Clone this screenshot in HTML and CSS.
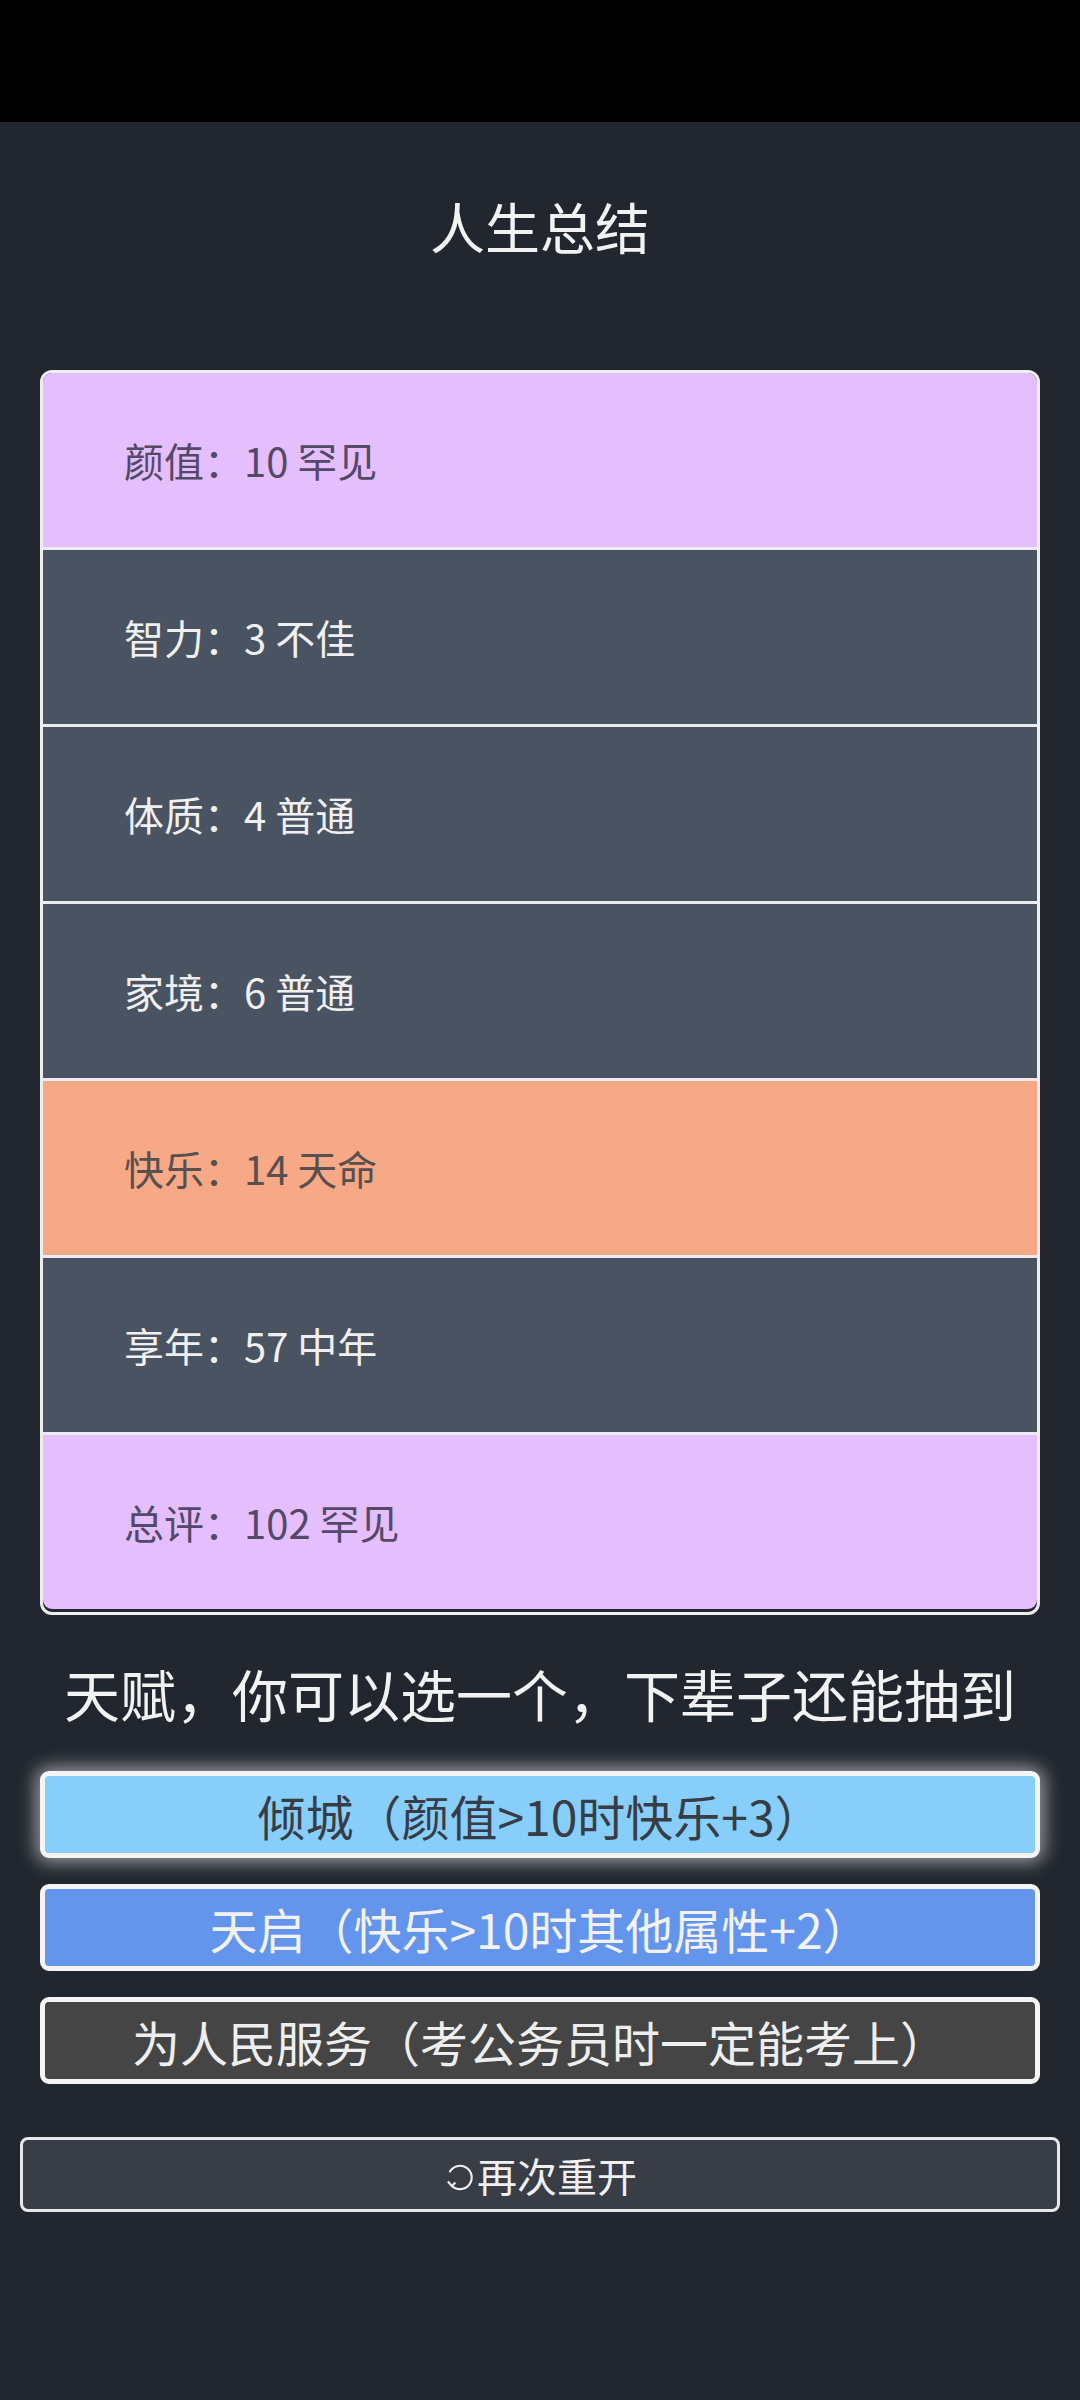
FILE: index.html
```html
<!DOCTYPE html>
<html lang="zh-CN">
<head>
<meta charset="utf-8">
<title>人生总结</title>
<link rel="stylesheet" href="styles.css">
</head>
<body>
<div class="statusbar"></div>
<main class="page">
  <h1 class="title">人生总结</h1>
  <ul class="summary">
    <li class="row rare">颜值：10 罕见</li>
    <li class="row plain">智力：3 不佳</li>
    <li class="row plain">体质：4 普通</li>
    <li class="row plain">家境：6 普通</li>
    <li class="row fate">快乐：14 天命</li>
    <li class="row plain">享年：57 中年</li>
    <li class="row rare">总评：102 罕见</li>
  </ul>
  <h2 class="talent-title">天赋，你可以选一个，下辈子还能抽到</h2>
  <div class="talents">
    <button class="talent t-sky selected">倾城（颜值&gt;10时快乐+3）</button>
    <button class="talent t-blue">天启（快乐&gt;10时其他属性+2）</button>
    <button class="talent t-dark">为人民服务（考公务员时一定能考上）</button>
  </div>
  <button class="restart"><svg class="restart-icon" viewBox="0 0 32 32" width="34" height="34"><path d="M8.2 24.2 A11 11 0 1 0 6.2 11.5" fill="none" stroke="currentColor" stroke-width="2"/><path d="M4.6 20.2 L8.4 24.6 L11.6 21.2" fill="none" stroke="currentColor" stroke-width="2" stroke-linejoin="round"/></svg>再次重开</button>
</main>
</body>
</html>
```

FILE: styles.css
```css
html, body {
  margin: 0;
  padding: 0;
}
body {
  background: #22272f;
  font-family: "Noto Sans CJK SC", "Noto Sans", sans-serif;
  color: #eeeeee;
  min-height: 2400px;
}
.statusbar {
  height: 122px;
  background: #000000;
}
.page {
  display: flex;
  flex-direction: column;
  padding: 0 20px;
}
.title {
  margin: 69px 0 0;
  font-size: 55px;
  font-weight: 400;
  line-height: 68px;
  text-align: center;
  color: #f2f2f2;
}
.summary {
  list-style: none;
  margin: 111px 20px 0;
  padding: 0 0 3px;
  border: 3px solid #eeeeee;
  border-radius: 12px;
  overflow: hidden;
  display: flex;
  flex-direction: column;
}
.row {
  height: 174px;
  display: flex;
  align-items: center;
  padding-left: 81px;
  font-size: 40px;
  border-bottom: 3px solid #ecebf2;
}
.row:last-child {
  border-bottom: none;
  border-radius: 0 0 9px 9px;
}
.rare {
  background: #e5bffd;
  color: #544a68;
}
.plain {
  background: #4a5361;
  color: #f0f0f0;
}
.fate {
  background: #f6a887;
  color: #56504f;
}
.talent-title {
  margin: 42px 0 0;
  font-size: 56px;
  font-weight: 400;
  line-height: 72px;
  text-align: center;
  color: #f2f2f2;
}
.talents {
  margin: 42px 20px 0;
  display: flex;
  flex-direction: column;
  gap: 26px;
}
.talent {
  height: 87px;
  border: 5px solid #f4f4f4;
  border-radius: 9px;
  font-family: inherit;
  font-size: 48px;
  line-height: 1;
  padding: 0;
  display: flex;
  align-items: center;
  justify-content: center;
}
.t-sky {
  background: #87cefa;
  color: #383d45;
}
.t-blue {
  background: #6495ed;
  color: #f2f2f2;
}
.t-dark {
  background: #454545;
  color: #eeeeee;
}
.selected {
  box-shadow: 0 0 18px 4px rgba(255, 255, 255, 0.55);
}
.restart {
  margin-top: 53px;
  height: 75px;
  background: #393d46;
  border: 3px solid #e8e8ea;
  border-radius: 8px;
  color: #f0f0f0;
  font-family: inherit;
  font-size: 40px;
  display: flex;
  align-items: center;
  justify-content: center;
  padding: 0;
}
.restart-icon {
  width: 34px;
  height: 34px;
  margin-top: 4px;
}
```
